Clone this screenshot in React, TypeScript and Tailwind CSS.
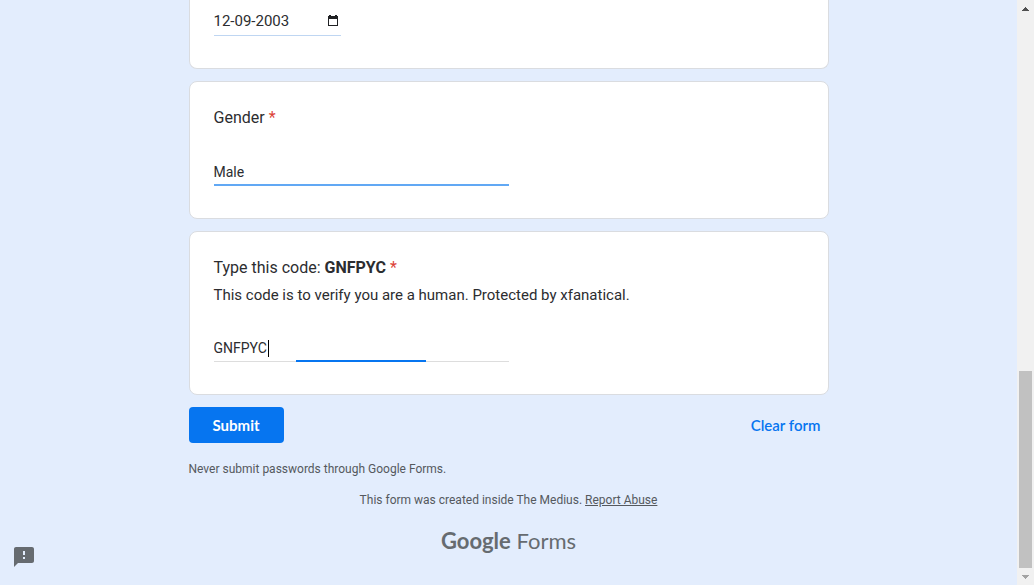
import { useState, type ReactNode } from "react";

function Required() {
  return <span className="text-[#dc4338]"> *</span>;
}

function Card({ children, className }: { children: ReactNode; className: string }) {
  return (
    <section className={`border-[#dadce0] bg-white px-6 ${className}`}>{children}</section>
  );
}

function ScrollRail() {
  return (
    <div aria-hidden="true" className="flex w-[17px] shrink-0 flex-col items-center bg-[#f1f1f1]">
      <div className="flex h-[17px] items-center">
        <svg width="7" height="4" viewBox="0 0 7 4" fill="#505050" shapeRendering="crispEdges">
          <path d="M3 0h1v1h1v1h1v1h1v1H0V3h1V2h1V1h1z" />
        </svg>
      </div>
      <div className="grow" />
      <div className="h-[197px] w-[13px] bg-[#c1c1c1]" />
      <div className="flex h-[17px] items-center">
        <svg width="7" height="4" viewBox="0 0 7 4" fill="#a3a3a3" shapeRendering="crispEdges">
          <path d="M0 0h7v1H6v1H5v1H4v1H3V3H2V2H1V1H0z" />
        </svg>
      </div>
    </div>
  );
}

export default function App() {
  const [date, setDate] = useState("12-09-2003");
  const [gender, setGender] = useState("Male");
  const [code, setCode] = useState("GNFPYC");

  return (
    <div className="flex min-h-screen bg-[#e3edfd] font-['Roboto',sans-serif] text-[#2c2d30]">
      <main className="min-w-0 grow">
        <form className="mx-auto w-full max-w-[640px]" onSubmit={(e) => e.preventDefault()}>
          <div className="flex flex-col gap-3">
            <Card className="rounded-b-lg border-x border-b pt-1.5 pb-8">
              <div className="flex h-[30px] w-[127px] items-center border-b border-[#bfd6f2]">
                <input
                  aria-label="Date of birth"
                  className="w-0 grow bg-transparent text-[15px] leading-6 outline-none"
                  value={date}
                  onChange={(e) => setDate(e.target.value)}
                />
                <button type="button" aria-label="Show date picker" className="mr-0.5">
                  <svg width="12" height="12" viewBox="0 0 12 12" fill="#202124">
                    <path d="M2 0h2v1h4V0h2v1h1v10H1V1h1zM2 4v6h8V4z" fillRule="evenodd" />
                  </svg>
                </button>
              </div>
            </Card>

            <Card className="rounded-lg border pt-6 pb-8">
              <label htmlFor="gender" className="block text-base leading-6">
                Gender
                <Required />
              </label>
              <input
                id="gender"
                className="mt-7 block h-7 w-1/2 border-b-2 border-[#61a8f4] bg-transparent pt-0.5 text-sm leading-6 outline-none"
                value={gender}
                onChange={(e) => setGender(e.target.value)}
              />
            </Card>

            <Card className="rounded-lg border pt-6 pb-8">
              <label htmlFor="code" className="block text-base leading-6">
                Type this code: <b className="font-bold">GNFPYC</b>
                <Required />
              </label>
              <p className="mt-1 text-[15px] leading-[22px]">
                This code is to verify you are a human. Protected by xfanatical.
              </p>
              <div className="relative mt-7 h-7 w-1/2 border-b border-[#dddddd]">
                <input
                  id="code"
                  className="block w-full bg-transparent text-sm leading-7 outline-none"
                  value={code}
                  onChange={(e) => setCode(e.target.value)}
                />
                <span className="absolute top-[6px] left-[54px] h-[17px] w-px bg-black" />
                <span className="absolute -bottom-px left-[28%] h-0.5 w-[44%] bg-[#0675f0]" />
              </div>
            </Card>
          </div>

          <div className="mt-3 flex items-center justify-between">
            <button
              type="submit"
              className="h-9 rounded bg-[#0675f0] px-6 font-['Lato',sans-serif] text-[15px] font-bold text-white"
            >
              Submit
            </button>
            <button
              type="button"
              className="h-9 px-2 font-['Lato',sans-serif] text-[15px] font-semibold text-[#0675f0]"
              onClick={() => {
                setDate("");
                setGender("");
                setCode("");
              }}
            >
              Clear form
            </button>
          </div>

          <p className="mt-[18px] text-xs leading-4 text-[#55595e]">
            Never submit passwords through Google Forms.
          </p>
        </form>

        <footer className="mt-[15px] text-center text-[#55595e]">
          <p className="text-xs leading-4">
            This form was created inside The Medius.{" "}
            <a href="#report" className="underline">
              Report Abuse
            </a>
          </p>
          <a
            href="#forms"
            className="mt-4 inline-block font-['Lato',sans-serif] text-[22px] leading-[34px] text-[#666b70]"
          >
            <span className="font-bold">Google</span> Forms
          </a>
        </footer>
      </main>

      <button type="button" aria-label="Report a problem" className="fixed bottom-4 left-3">
        <svg width="24" height="24" viewBox="0 0 24 24" fill="#666b70">
          <path d="M20 2H4c-1.1 0-2 .9-2 2v18l4-4h14c1.1 0 2-.9 2-2V4c0-1.1-.9-2-2-2zm-7 12h-2v-2h2v2zm0-4h-2V6h2v4z" />
        </svg>
      </button>
      <ScrollRail />
    </div>
  );
}
